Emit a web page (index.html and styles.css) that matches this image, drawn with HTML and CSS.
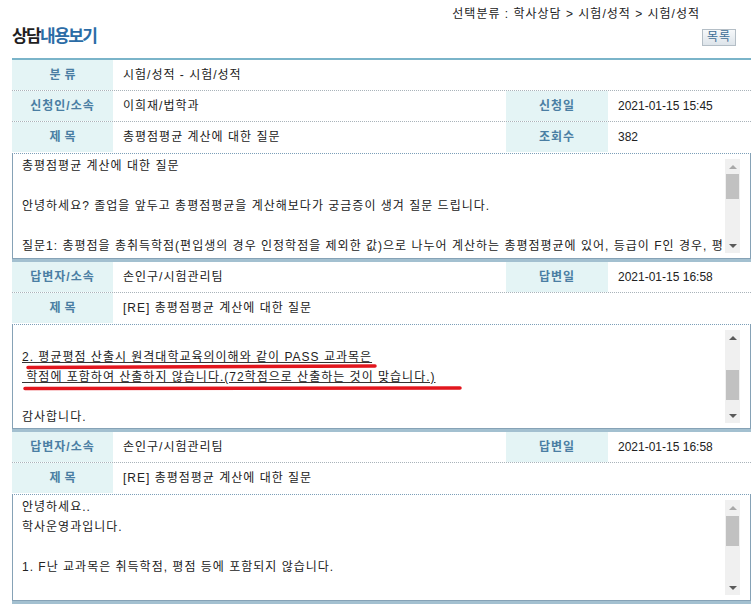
FILE: index.html
```html
<!DOCTYPE html>
<html lang="ko">
<head>
<meta charset="utf-8">
<title>상담내용보기</title>
<link rel="stylesheet" href="styles.css">
</head>
<body>
<div class="page">
  <div class="top">
    <h1 class="title">상담<span class="hl">내용보기</span></h1>
    <div class="topright">
      <div class="crumb">선택분류 : 학사상담 &gt; 시험/성적 &gt; 시험/성적</div>
      <button class="btn">목록</button>
    </div>
  </div>

  <div class="board">
    <div class="row single">
      <div class="lab lab2">분류</div>
      <div class="val">시험/성적 - 시험/성적</div>
    </div>
    <div class="row">
      <div class="lab">신청인/소속</div>
      <div class="val">이희재/법학과</div>
      <div class="lab">신청일</div>
      <div class="val num">2021-01-15 15:45</div>
    </div>
    <div class="row nb">
      <div class="lab lab2">제목</div>
      <div class="val">총평점평균 계산에 대한 질문</div>
      <div class="lab">조회수</div>
      <div class="val num">382</div>
    </div>
    <div class="content">
      <div class="box box1">
        <div class="text">
          <div class="line">총평점평균 계산에 대한 질문</div>
          <div class="line"></div>
          <div class="line">안녕하세요? 졸업을 앞두고 총평점평균을 계산해보다가 궁금증이 생겨 질문 드립니다.</div>
          <div class="line"></div>
          <div class="line">질문1: 총평점을 총취득학점(편입생의 경우 인정학점을 제외한 값)으로 나누어 계산하는 총평점평균에 있어, 등급이 F인 경우, 평</div>
        </div>
        <div class="sbar">
          <div class="arrow up dis"></div>
          <div class="track"><div class="thumb" style="margin-top:0;height:25px"></div></div>
          <div class="arrow down"></div>
        </div>
      </div>
    </div>

    <div class="row">
      <div class="lab">답변자/소속</div>
      <div class="val">손인구/시험관리팀</div>
      <div class="lab">답변일</div>
      <div class="val num">2021-01-15 16:58</div>
    </div>
    <div class="row nb single">
      <div class="lab lab2">제목</div>
      <div class="val">[RE] 총평점평균 계산에 대한 질문</div>
    </div>
    <div class="content">
      <div class="box box2">
        <div class="text">
          <div class="line"></div>
          <div class="line"><u>2. 평균평점 산출시 원격대학교육의이해와 같이 PASS 교과목은</u></div>
          <div class="line"><u>&nbsp;학점에 포함하여 산출하지 않습니다.(72학점으로 산출하는 것이 맞습니다.)</u></div>
          <div class="line"></div>
          <div class="line">감사합니다.</div>
        </div>
        <div class="sbar">
          <div class="arrow up"></div>
          <div class="track"><div class="thumb" style="margin-top:25px;height:30px"></div></div>
          <div class="arrow down"></div>
        </div>
        <svg class="marks" viewBox="0 0 737 103" preserveAspectRatio="none">
          <path d="M15 42.5 L362 41" />
          <path d="M12 63.5 L447 63" />
        </svg>
      </div>
    </div>

    <div class="row">
      <div class="lab">답변자/소속</div>
      <div class="val">손인구/시험관리팀</div>
      <div class="lab">답변일</div>
      <div class="val num">2021-01-15 16:58</div>
    </div>
    <div class="row nb single">
      <div class="lab lab2">제목</div>
      <div class="val">[RE] 총평점평균 계산에 대한 질문</div>
    </div>
    <div class="content">
      <div class="box box3">
        <div class="text">
          <div class="line">안녕하세요..</div>
          <div class="line">학사운영과입니다.</div>
          <div class="line"></div>
          <div class="line">1. F난 교과목은 취득학점, 평점 등에 포함되지 않습니다.</div>
        </div>
        <div class="sbar">
          <div class="arrow up dis"></div>
          <div class="track"><div class="thumb" style="margin-top:1px;height:30px"></div></div>
          <div class="arrow down"></div>
        </div>
      </div>
    </div>
  </div>
</div>
</body>
</html>
```

FILE: styles.css
```css
* { box-sizing: border-box; }

body {
  margin: 0;
  background: #ffffff;
  color: #222222;
  font-family: "Liberation Sans", "Noto Sans CJK KR", sans-serif;
  font-size: 12px;
  line-height: 20px;
  letter-spacing: 1px;
}

.page {
  padding: 0 5px 0 12px;
}

.top {
  height: 58px;
  display: flex;
  justify-content: space-between;
}

.title {
  margin: 26px 0 0 0;
  font-size: 17px;
  line-height: 22px;
  font-weight: bold;
  letter-spacing: -1.6px;
  color: #1f1f1f;
}

.title .hl {
  color: #2b6ca6;
}

.topright {
  display: flex;
  flex-direction: column;
  align-items: flex-end;
}

.crumb {
  margin: 5px 51px 0 0;
  line-height: 18px;
  color: #222;
}

.btn {
  margin: 6px 15px 0 0;
  width: 34px;
  height: 17px;
  padding: 0;
  border: 1px solid #b4bec6;
  background: linear-gradient(#f6f8fa, #dde4ea);
  color: #3d6d96;
  font-family: "Liberation Sans", "Noto Sans CJK KR", sans-serif;
  font-size: 12px;
  line-height: 15px;
  letter-spacing: 1px;
}

.board {
  border-top: 2px solid #7ab4c9;
}

.row {
  display: grid;
  grid-template-columns: 101px 393px 102px 1fr;
  height: 31px;
  border-bottom: 1px dotted #a9b3ba;
}

.row.single {
  grid-template-columns: 101px 1fr;
}

.row.nb {
  height: 30px;
  border-bottom: none;
}

.lab {
  background: #e4f4f5;
  display: flex;
  align-items: center;
  justify-content: center;
  font-weight: bold;
  color: #4a7ea3;
  letter-spacing: 1px;
  white-space: nowrap;
}

.lab2 {
  letter-spacing: 4px;
  text-indent: 4px;
}

.val {
  display: flex;
  align-items: center;
  padding-left: 10px;
  white-space: nowrap;
}

.val.num {
  letter-spacing: 0;
}

.content {
  padding-top: 1px;
  border-bottom: 3px solid #a3c0d0;
}

.box {
  position: relative;
  display: flex;
  height: 106px;
  padding: 2px 10px 2px 9px;
  border: 1px solid #86a2b6;
  border-top: 1px dotted #7c9fb8;
}

.box2 { height: 105px; }
.box3 { height: 107px; }

.text {
  flex: 1;
  overflow: hidden;
}

.line {
  height: 20px;
  white-space: nowrap;
  overflow: hidden;
}

.line u {
  text-decoration-color: #333;
}

.sbar {
  width: 15px;
  margin: 3px 0;
  background: #f0f0f0;
  display: flex;
  flex-direction: column;
}

.arrow {
  height: 15px;
  display: flex;
  align-items: center;
  justify-content: center;
}

.arrow::before {
  content: "";
  width: 0;
  height: 0;
  border-left: 4px solid transparent;
  border-right: 4px solid transparent;
}

.arrow.up::before {
  border-bottom: 4px solid #5a5a5a;
}

.arrow.up.dis::before {
  border-bottom-color: #a8a8a8;
}

.arrow.down::before {
  border-top: 4px solid #5a5a5a;
}

.track {
  flex: 1;
}

.thumb {
  margin: 0 1px;
  background: #c1c1c1;
}

.marks {
  position: absolute;
  left: 0;
  top: 0;
  width: 100%;
  height: 100%;
  pointer-events: none;
}

.marks path {
  fill: none;
  stroke: #e2161e;
  stroke-width: 3.5;
  stroke-linecap: round;
}
```
